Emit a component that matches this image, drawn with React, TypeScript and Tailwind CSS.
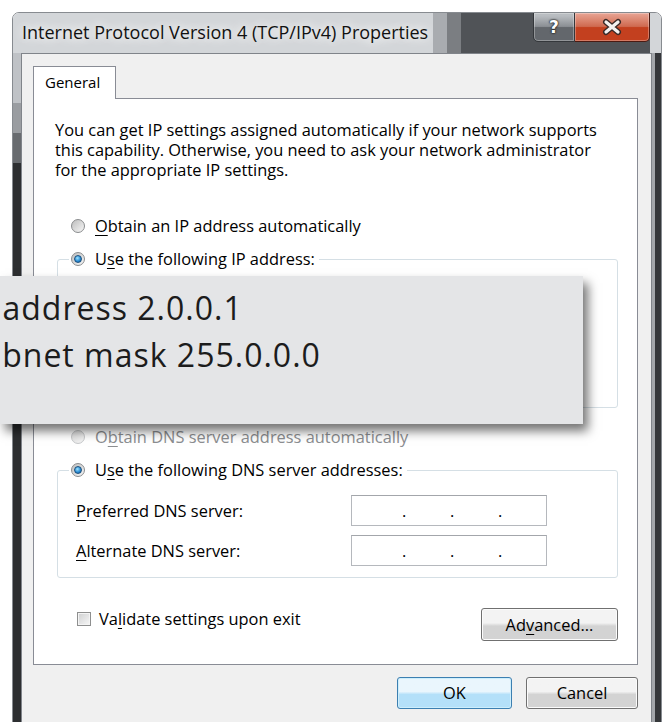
import type { ReactNode } from "react";

// Win7-style radio button
const Radio = ({ checked = false, disabled = false }: { checked?: boolean; disabled?: boolean }) => {
  return (
    <span
      className={
        "flex h-[14px] w-[14px] shrink-0 items-center justify-center rounded-full border " +
        (disabled
          ? "border-[#c6c8ca] bg-gradient-to-br from-[#dcdcdc] to-[#f4f4f4]"
          : "border-[#8a8c8e] bg-gradient-to-br from-[#bdbdbd] to-[#f8f8f8]")
      }
    >
      {checked && (
        <span className="h-[8px] w-[8px] rounded-full border border-[#1b4f7d] bg-[radial-gradient(circle_at_40%_35%,#9fe4ff_0%,#2c8fd6_55%,#125a99_100%)]" />
      )}
    </span>
  );
};

// Underlined access key
const Key = ({ children }: { children: ReactNode }) => (
  <span className="underline decoration-1 underline-offset-[3px]">{children}</span>
);

// Empty IP address box with its three dots
const IpBox = () => (
  <div className="flex h-[31px] w-[196px] items-center border border-[#b5b8bd] border-t-[#a3a6ab] bg-white pl-[50px]">
    <span className="w-[48px]">.</span>
    <span className="w-[48px]">.</span>
    <span>.</span>
  </div>
);

const FieldRow = ({ label }: { label: ReactNode }) => (
  <div className="flex items-center">
    <span className="ml-[7px] w-[275px]">{label}</span>
    <IpBox />
  </div>
);

const btn =
  "flex items-center justify-center rounded-[3px] border border-[#707070] bg-gradient-to-b from-[#f3f3f3] from-45% to-[#d3d3d3] to-55% shadow-[inset_0_0_0_1px_#fbfbfb]";

const TitleBar = () => (
  <div className="flex h-[40px] shrink-0 items-stretch bg-[#d3d6d9] pl-[9px] pr-[11px]">
    <span className="min-w-0 flex-1 pt-[8px] text-[18px] leading-[22px] text-[#111] [text-shadow:0_0_8px_#fff,0_0_14px_#fff]">
      Internet Protocol Version 4 (TCP/IPv4) Properties
    </span>
    {/* darker glass behind the caption buttons */}
    <div className="w-[14px] shrink-0 bg-[#a9acb0]" />
    <div className="w-[14px] shrink-0 bg-[#7b7e82]" />
    <div className="w-[72px] shrink-0 bg-[#505357]" />
    <div className="flex shrink-0 items-start bg-[#505357]">
      {/* help */}
      <div className="-mt-px flex h-[30px] w-[42px] items-center justify-center rounded-bl-[5px] border border-[#34373b] bg-gradient-to-b from-[#b9bdc1] from-10% via-[#8b8f94] via-48% to-[#63676c] to-52% shadow-[inset_0_0_0_1px_rgba(255,255,255,0.3)]">
        <span className="font-['DejaVu_Sans',sans-serif] text-[17px] font-bold leading-none text-white [text-shadow:0_0_1px_#222,0_0_2px_#222,0_0_2px_#222]">
          ?
        </span>
      </div>
      {/* close */}
      <div className="-mt-px flex h-[30px] w-[75px] items-center justify-center rounded-br-[5px] border border-l-0 border-[#4b1a12] bg-gradient-to-b from-[#e8a595] via-[#cf6a50] via-48% to-[#c3401f] to-52% shadow-[inset_0_0_0_1px_rgba(255,255,255,0.3)]">
        <svg width="24" height="18" viewBox="0 0 24 18">
          <path d="M6 4 L18 14 M18 4 L6 14" stroke="#3a2a28" strokeWidth="6" strokeLinecap="round" />
          <path d="M6 4 L18 14 M18 4 L6 14" stroke="#f4f1f0" strokeWidth="3.2" strokeLinecap="round" />
        </svg>
      </div>
    </div>
  </div>
);

export default function App() {
  return (
    <div className="relative h-[722px] overflow-hidden bg-white pl-[12px] pr-[3px] pt-[12px] font-['Open_Sans',sans-serif] text-[16.4px] leading-[20px] text-black">
      <div className="flex h-[740px] flex-col overflow-hidden rounded-t-[7px] border border-[#878b90]">
        <TitleBar />

        <div className="flex min-h-0 flex-1">
          {/* left frame */}
          <div className="flex w-[8px] shrink-0 flex-col">
            <div className="h-[50px] bg-[#bfc2c6]" />
            <div className="h-[30px] bg-[#9a9da1]" />
            <div className="h-[30px] bg-[#686b6f]" />
            <div className="flex-1 bg-[#2d2f31]" />
          </div>

          <div className="min-w-0 flex-1 border border-[#80848a] bg-[#f0f0f0] pl-[11px] pr-[13px] pt-[12px]">
            {/* tab */}
            <div className="relative z-10 flex h-[33px] w-[83px] items-start border border-b-0 border-[#898c95] bg-white pl-[11px] pt-[5px] text-[15px]">
              General
            </div>

            {/* tab page */}
            <div className="-mt-px flex h-[567px] flex-col border border-[#898c95] bg-white pl-[22px] pr-[19px] pt-[21px]">
              <p className="-ml-px">
                You can get IP settings assigned automatically if your network supports
                <br />
                this capability. Otherwise, you need to ask your network administrator
                <br />
                for the appropriate IP settings.
              </p>

              <label className="ml-[15px] mt-[36px] flex h-[20px] items-center gap-[10px]">
                <Radio />
                <span>
                  <Key>O</Key>btain an IP address automatically
                </span>
              </label>

              <fieldset className="ml-[1px] mt-[13px] rounded-[3px] border border-[#d5dfe5] pl-[11px]">
                <legend className="flex h-[20px] items-center gap-[10px] pl-[2px] pr-[4px]">
                  <Radio checked />
                  <span>
                    U<Key>s</Key>e the following IP address:
                  </span>
                </legend>
                <div className="h-[138px]" />
              </fieldset>

              <label className="ml-[15px] mt-[19px] flex h-[20px] items-center gap-[10px] text-[#8b8d90]">
                <Radio disabled />
                <span>
                  O<Key>b</Key>tain DNS server address automatically
                </span>
              </label>

              <fieldset className="ml-[1px] mt-[13px] rounded-[3px] border border-[#d5dfe5] pl-[11px]">
                <legend className="flex h-[20px] items-center gap-[10px] pl-[2px] pr-[4px]">
                  <Radio checked />
                  <span>
                    U<Key>s</Key>e the following DNS server addresses:
                  </span>
                </legend>
                <div className="flex flex-col gap-[9px] pb-[11px] pt-[15px]">
                  <FieldRow label={<><Key>P</Key>referred DNS server:</>} />
                  <FieldRow label={<><Key>A</Key>lternate DNS server:</>} />
                </div>
              </fieldset>

              <div className="mt-[30px] flex items-start justify-between">
                <label className="ml-[21px] mt-px flex items-center gap-[8px]">
                  <span className="h-[14px] w-[14px] border border-[#8e8f8f] bg-gradient-to-br from-[#cfd0d1] to-[#f7f7f7] shadow-[inset_0_0_0_1px_#f4f4f4]" />
                  <span>
                    Va<Key>l</Key>idate settings upon exit
                  </span>
                </label>
                <div className={btn + " h-[33px] w-[137px]"}>
                  Ad<Key>v</Key>anced...
                </div>
              </div>
            </div>

            {/* dialog buttons */}
            <div className="mt-[12px] flex justify-end gap-[14px]">
              <div className="flex h-[32px] w-[115px] items-center justify-center rounded-[3px] border border-[#3c7fb1] bg-gradient-to-b from-[#eaf6fd] from-45% to-[#b4e0f9] to-55% shadow-[inset_0_0_0_1px_#cdeefc]">
                OK
              </div>
              <div className={btn + " h-[32px] w-[112px]"}>Cancel</div>
            </div>
          </div>

          {/* right frame */}
          <div className="flex w-[9px] shrink-0 border-l-[3px] border-[#a3a6aa] bg-[#35373a]" />
        </div>
      </div>

      {/* callout over the IP fields */}
      <div className="absolute left-0 top-[276px] z-20 h-[148px] w-[583px] bg-[#e4e5e7] pt-[8px] text-[32px] leading-[47px] tracking-[1px] text-[#1c1c1c] shadow-[5px_7px_10px_rgba(0,0,0,0.55)]">
        <p className="-ml-[37px]">IP address 2.0.0.1</p>
        <p className="-ml-[37px]">Subnet mask 255.0.0.0</p>
      </div>
    </div>
  );
}
